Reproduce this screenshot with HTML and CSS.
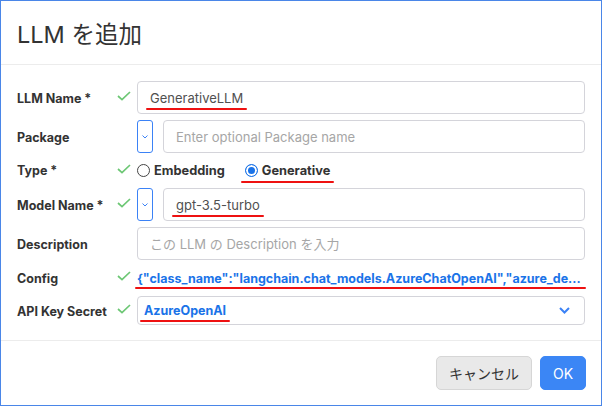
FILE: index.html
```html
<!DOCTYPE html>
<html lang="ja">
<head>
<meta charset="utf-8">
<title>LLM を追加</title>
<link rel="stylesheet" href="styles.css">
</head>
<body>
<div class="dialog">
  <header class="dlg-head">
    <h1 class="dlg-title">LLM を追加</h1>
  </header>
  <div class="dlg-body">
    <div class="row row-input">
      <div class="label">LLM Name *</div>
      <div class="check"><svg width="14" height="10" viewBox="0 0 14 10"><polyline points="1,5 5,8.6 13,1" fill="none" stroke="#6cc774" stroke-width="1.7"/></svg></div>
      <div class="field">
        <div class="input"><span class="mark">GenerativeLLM</span></div>
      </div>
    </div>
    <div class="row row-input">
      <div class="label">Package</div>
      <div class="check"></div>
      <div class="field field-split">
        <div class="mini-btn"><svg width="6" height="4" viewBox="0 0 6 4"><polyline points="0.5,0.5 3,3 5.5,0.5" fill="none" stroke="#3b82f6" stroke-width="1"/></svg></div>
        <div class="input placeholder">Enter optional Package name</div>
      </div>
    </div>
    <div class="row row-radio">
      <div class="label">Type *</div>
      <div class="check"><svg width="14" height="10" viewBox="0 0 14 10"><polyline points="1,5 5,8.6 13,1" fill="none" stroke="#6cc774" stroke-width="1.7"/></svg></div>
      <div class="field radios">
        <label class="radio"><span class="dot"></span><span class="radio-text">Embedding</span></label>
        <label class="radio mark mark-radio"><span class="dot dot-on"></span><span class="radio-text">Generative</span></label>
      </div>
    </div>
    <div class="row row-input">
      <div class="label">Model Name *</div>
      <div class="check"><svg width="14" height="10" viewBox="0 0 14 10"><polyline points="1,5 5,8.6 13,1" fill="none" stroke="#6cc774" stroke-width="1.7"/></svg></div>
      <div class="field field-split">
        <div class="mini-btn"><svg width="6" height="4" viewBox="0 0 6 4"><polyline points="0.5,0.5 3,3 5.5,0.5" fill="none" stroke="#3b82f6" stroke-width="1"/></svg></div>
        <div class="input"><span class="mark">gpt-3.5-turbo</span></div>
      </div>
    </div>
    <div class="row row-input">
      <div class="label">Description</div>
      <div class="check"></div>
      <div class="field">
        <div class="input placeholder">この LLM の Description を入力</div>
      </div>
    </div>
    <div class="row row-config">
      <div class="label">Config</div>
      <div class="check"><svg width="14" height="10" viewBox="0 0 14 10"><polyline points="1,5 5,8.6 13,1" fill="none" stroke="#6cc774" stroke-width="1.7"/></svg></div>
      <div class="field">
        <div class="config mark mark-config">{"class_name":"langchain.chat_models.AzureChatOpenAI","azure_de...</div>
      </div>
    </div>
    <div class="row row-select">
      <div class="label">API Key Secret</div>
      <div class="check"><svg width="14" height="10" viewBox="0 0 14 10"><polyline points="1,5 5,8.6 13,1" fill="none" stroke="#6cc774" stroke-width="1.7"/></svg></div>
      <div class="field">
        <div class="select"><span class="mark select-value">AzureOpenAI</span>
          <svg class="chev" width="11" height="7" viewBox="0 0 11 7"><polyline points="1,1 5.5,5.5 10,1" fill="none" stroke="#3b82f6" stroke-width="2"/></svg>
        </div>
      </div>
    </div>
  </div>
  <footer class="dlg-foot">
    <button class="btn btn-cancel">キャンセル</button>
    <button class="btn btn-ok">OK</button>
  </footer>
</div>
</body>
</html>
```
FILE: styles.css
```css
* { box-sizing: border-box; }
html, body { margin: 0; padding: 0; background: #fff; }
body {
  font-family: Inter, "Noto Sans CJK JP", sans-serif;
  color: #333;
}
.dialog {
  width: 602px;
  height: 406px;
  border: 1px solid #4a86e8;
  display: flex;
  flex-direction: column;
  background: #fff;
}
.dlg-head {
  height: 64px;
  border-bottom: 1px solid #ececec;
  padding: 0 16px;
  display: flex;
  align-items: center;
}
.dlg-title {
  margin: 0;
  font-size: 23.5px;
  font-weight: 400;
  color: #333;
  line-height: 1;
  padding-top: 4px;
}
.dlg-body {
  padding: 16px 16px 0;
  flex: 1;
}
.row {
  display: grid;
  grid-template-columns: 100px 20px 1fr;
  align-items: center;
  margin-bottom: 6px;
}
.row-input { height: 33px; }
.row-radio { height: 23px; }
.row-config { height: 24px; }
.row-select { height: 29px; }
.label {
  font-size: 12.5px;
  font-weight: 700;
  color: #333;
  white-space: nowrap;
}
.row-input .label, .row-select .label { padding-top: 2px; }
.check { height: 10px; display: flex; align-items: center; margin-top: -4px; }
.check svg { display: block; }
.field { height: 100%; display: flex; align-items: center; min-width: 0; }
.field-split { gap: 10px; }
.input {
  flex: 1;
  height: 33px;
  border: 1px solid #d4d4da;
  border-radius: 4px;
  padding: 0 12px;
  display: flex;
  align-items: center;
  font-size: 13px;
  color: #505050;
}
.placeholder { color: #a6a6a6; }
.mini-btn {
  width: 16px;
  height: 33px;
  border: 1px solid #3b82f6;
  border-radius: 3px;
  display: flex;
  align-items: center;
  justify-content: center;
  flex: none;
}
.mini-btn svg { display: block; }
.mark { position: relative; }
.mark::after {
  content: "";
  position: absolute;
  left: -4px;
  right: -4px;
  bottom: -4px;
  height: 2px;
  border-radius: 1px;
  background: #ee1111;
}
.radios { gap: 20px; }
.radio {
  display: flex;
  align-items: center;
  gap: 4px;
  font-size: 12.8px;
  font-weight: 700;
  color: #333;
}
.dot {
  width: 13px;
  height: 13px;
  border-radius: 50%;
  border: 1px solid #444;
  display: block;
  flex: none;
}
.dot-on {
  border: 1.5px solid #1a73e8;
  background: #1a73e8;
  box-shadow: inset 0 0 0 2px #fff;
}
.mark-radio::after { bottom: -5px; }
.config {
  font-size: 12.5px;
  font-weight: 700;
  color: #1a73e8;
  white-space: nowrap;
}
.mark-config::after { left: -2px; right: -5px; bottom: -3px; }
.select {
  flex: 1;
  height: 29px;
  border: 1px solid #d4d4da;
  border-radius: 4px;
  padding: 0 14px 0 6px;
  display: flex;
  align-items: center;
  justify-content: space-between;
}
.select-value {
  font-size: 12.5px;
  font-weight: 700;
  color: #1a73e8;
}
.chev { display: block; }
.dlg-foot {
  height: 65px;
  border-top: 1px solid #ececec;
  padding: 0 15px;
  display: flex;
  align-items: center;
  justify-content: flex-end;
  gap: 8px;
}
.btn {
  height: 34px;
  border-radius: 5px;
  font-family: Inter, "Noto Sans CJK JP", sans-serif;
  font-size: 14px;
  padding: 0 12px;
}
.btn-cancel {
  background: #e9e9e9;
  border: 1px solid #d6d6d6;
  color: #333;
  width: 96px;
}
.btn-ok {
  background: #3b86f5;
  border: 1px solid #3b86f5;
  color: #fff;
  width: 46px;
}
```
